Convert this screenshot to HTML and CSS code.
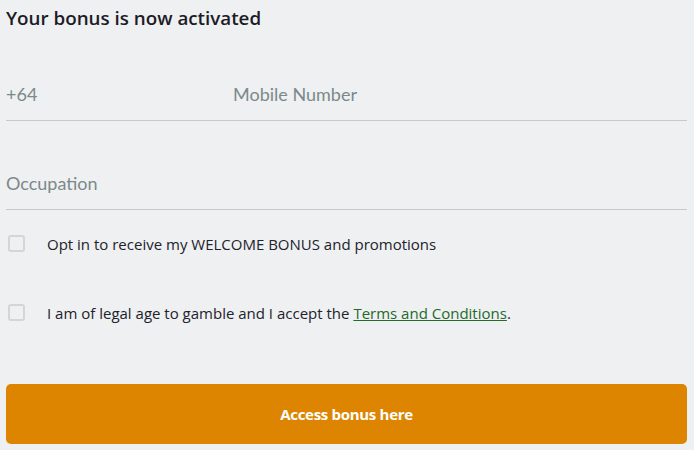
FILE: index.html
```html
<!DOCTYPE html>
<html lang="en">
<head>
<meta charset="utf-8">
<title>Bonus</title>
<link rel="stylesheet" href="styles.css">
</head>
<body>
<form class="form">
  <h1 class="title">Your bonus is now activated</h1>
  <div class="field field-phone">
    <span class="prefix">+64</span>
    <span class="placeholder">Mobile Number</span>
  </div>
  <div class="field field-occ">
    <span class="placeholder">Occupation</span>
  </div>
  <label class="check check-1">
    <span class="box"></span>
    <span class="label">Opt in to receive my WELCOME BONUS and promotions</span>
  </label>
  <label class="check check-2">
    <span class="box"></span>
    <span class="label">I am of legal age to gamble and I accept the <a class="link" href="#">Terms and Conditions</a>.</span>
  </label>
  <button class="btn" type="button">Access bonus here</button>
</form>
</body>
</html>
```
FILE: styles.css
```css
html, body {
  margin: 0;
  padding: 0;
  background: #eef0f1;
}
body {
  font-family: "Open Sans", "Noto Sans", sans-serif;
  color: #1f1f2b;
}
.form {
  display: flex;
  flex-direction: column;
  padding: 0 7px 0 6px;
}
.title {
  margin: 0;
  height: 36px;
  line-height: 36px;
  font-size: 18.8px;
  font-weight: 600;
  color: #1c1b26;
}
.field {
  display: flex;
  align-items: center;
  border-bottom: 1px solid #c6c9cb;
  padding-bottom: 14px;
  font-family: Lato, "Open Sans", sans-serif;
  font-size: 18px;
  line-height: 24px;
  color: #7c898b;
}
.field-phone {
  padding-top: 46px;
}
.field-occ {
  padding-top: 50px;
}
.prefix {
  width: 227px;
}
.check {
  display: flex;
  align-items: center;
  height: 24px;
  font-size: 15px;
  color: #22222c;
}
.check-1 {
  margin-top: 22px;
}
.check-2 {
  margin-top: 45px;
}
.box {
  box-sizing: border-box;
  width: 17px;
  height: 17px;
  margin: -2px 22px 0 2px;
  border: 2px solid #d3d5d7;
  border-radius: 3px;
  background: #eef0f1;
}
.link {
  color: #246a2a;
  text-decoration: underline;
}
.btn {
  margin-top: 59px;
  height: 60px;
  border: 0;
  border-radius: 5px;
  background: #dd8500;
  color: #fff;
  font-family: "Open Sans", sans-serif;
  font-size: 15px;
  font-weight: 700;
  letter-spacing: -0.3px;
}
```
